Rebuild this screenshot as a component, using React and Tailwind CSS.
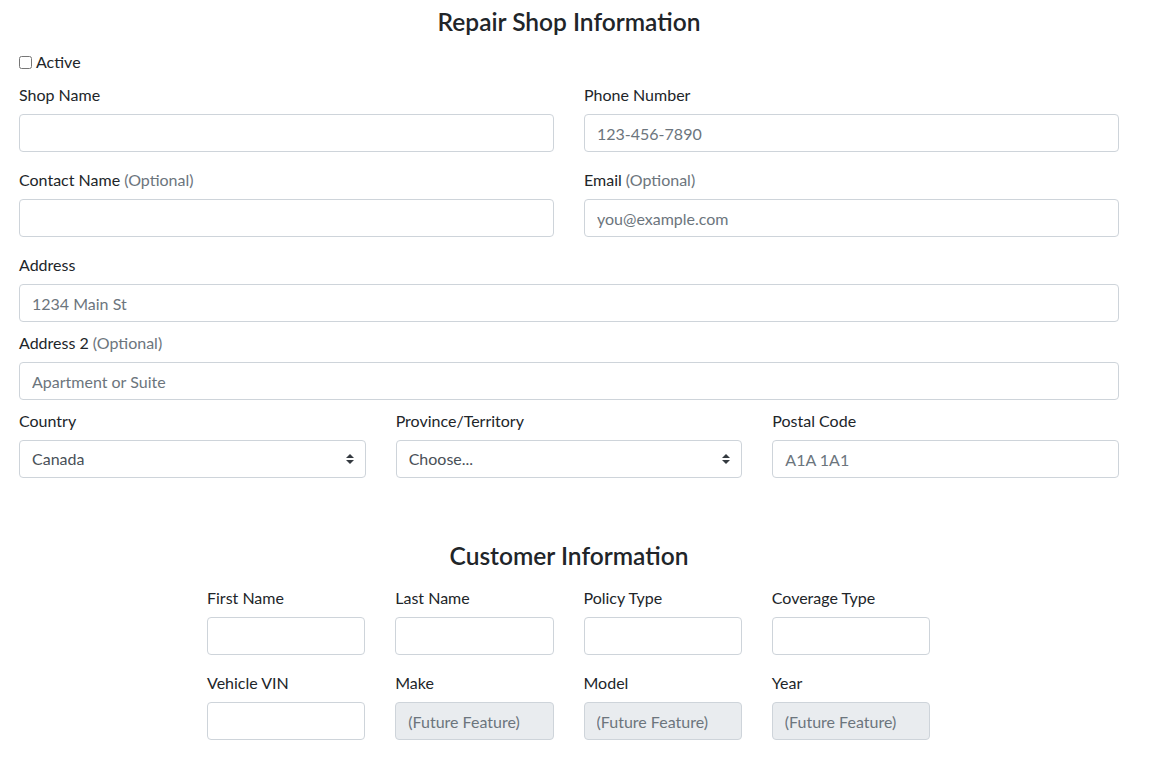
const font = { fontFamily: "Lato, 'Liberation Sans', sans-serif" };

function Label({ text, optional }) {
  return (
    <label className="block leading-[23px] text-[16px] text-[#212529] mb-2">
      {text}
      {optional && <span className="text-[#6c757d]"> (Optional)</span>}
    </label>
  );
}

function Field({ label, optional, placeholder, disabled }) {
  return (
    <div>
      <Label text={label} optional={optional} />
      <input
        type="text"
        placeholder={placeholder}
        disabled={disabled}
        className={`block w-full h-[38px] rounded-[4px] border border-[#ced4da] px-3 text-[16px] text-[#495057] placeholder:text-[#6c757d] outline-none ${
          disabled ? "bg-[#e9ecef]" : "bg-white"
        }`}
      />
    </div>
  );
}

function SelectField({ label, value }) {
  return (
    <div>
      <Label text={label} />
      <div className="relative">
        <select
          defaultValue={value}
          className="block w-full h-[38px] appearance-none rounded-[4px] border border-[#ced4da] bg-white pl-3 pr-8 text-[16px] text-[#495057] outline-none"
        >
          <option>{value}</option>
        </select>
        <svg
          className="absolute right-3 top-1/2 -translate-y-1/2 pointer-events-none"
          width="8"
          height="10"
          viewBox="0 0 4 5"
        >
          <path d="M2 0L0 2h4zm0 5L0 3h4z" fill="#343a40" />
        </svg>
      </div>
    </div>
  );
}

export default function App() {
  return (
    <div className="min-h-screen bg-white pt-[7px] pb-6" style={font}>
      <div className="ml-[19px] w-[1100px]">
        <h3 className="h-[29px] leading-[29px] text-[24.5px] font-semibold text-[#212529] text-center">
          Repair Shop Information
        </h3>

        <div className="mt-[14px] h-[24px] flex items-center">
          <input type="checkbox" className="m-0 w-[13px] h-[13px]" />
          <span className="ml-1 text-[16px] text-[#212529]">Active</span>
        </div>

        <div className="mt-[9px] grid grid-cols-2 gap-x-[30px]">
          <Field label="Shop Name" />
          <Field label="Phone Number" placeholder="123-456-7890" />
        </div>

        <div className="mt-4 grid grid-cols-2 gap-x-[30px]">
          <Field label="Contact Name" optional />
          <Field label="Email" optional placeholder="you@example.com" />
        </div>

        <div className="mt-4">
          <Field label="Address" placeholder="1234 Main St" />
        </div>

        <div className="mt-[9px]">
          <Field label="Address 2" optional placeholder="Apartment or Suite" />
        </div>

        <div className="mt-[9px] grid grid-cols-3 gap-x-[30px]">
          <SelectField label="Country" value="Canada" />
          <SelectField label="Province/Territory" value="Choose..." />
          <Field label="Postal Code" placeholder="A1A 1A1" />
        </div>

        <h3 className="mt-[63px] h-[29px] leading-[29px] text-[24.5px] font-semibold text-[#212529] text-center">
          Customer Information
        </h3>

        <div className="ml-[188px] w-[723px]">
          <div className="mt-4 grid grid-cols-4 gap-x-[30px]">
            <Field label="First Name" />
            <Field label="Last Name" />
            <Field label="Policy Type" />
            <Field label="Coverage Type" />
          </div>
          <div className="mt-4 grid grid-cols-4 gap-x-[30px]">
            <Field label="Vehicle VIN" />
            <Field label="Make" placeholder="(Future Feature)" disabled />
            <Field label="Model" placeholder="(Future Feature)" disabled />
            <Field label="Year" placeholder="(Future Feature)" disabled />
          </div>
        </div>
      </div>
    </div>
  );
}
